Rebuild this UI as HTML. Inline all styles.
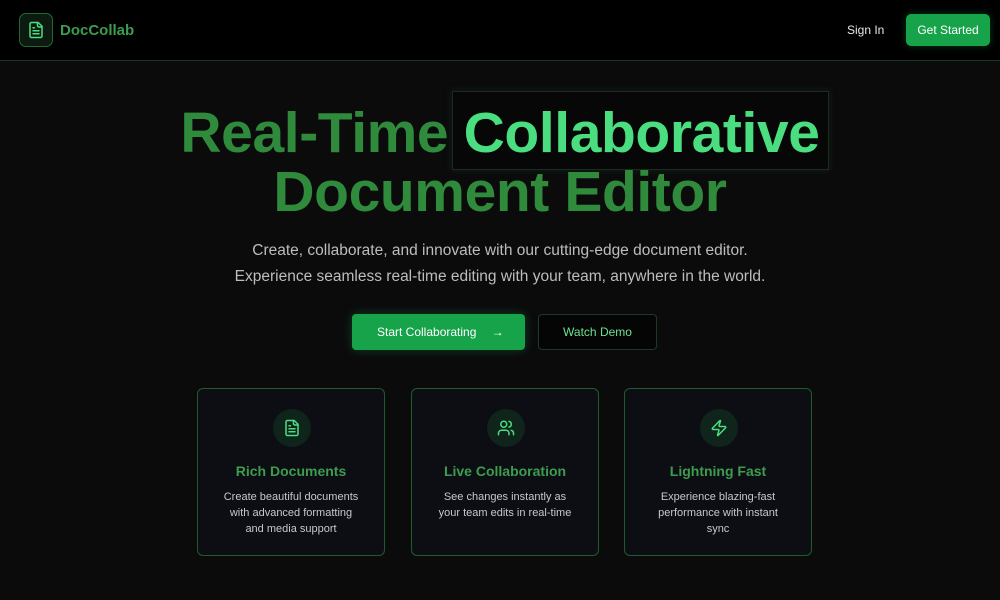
<!DOCTYPE html>
<html><head><style>
*{margin:0;padding:0;box-sizing:border-box}
body{width:1000px;height:600px;background:#0b0b0c;font-family:"Liberation Sans",sans-serif;overflow:hidden;position:relative}
.hdr{position:absolute;left:0;top:0;width:1000px;height:61px;background:#000;border-bottom:1px solid #143820}
.logo{position:absolute;left:19px;top:13px;width:34px;height:34px;border:1px solid #1f6b35;border-radius:7px;background:#0c1a10;display:flex;align-items:center;justify-content:center}
.brand{position:absolute;left:60px;top:22px;color:#3d9c4d;font-weight:bold;font-size:15px}
.signin{position:absolute;left:847px;top:23px;color:#e8e8e8;font-size:12px}
.gs{position:absolute;left:906px;top:14px;width:84px;height:32px;background:#16a34a;border-radius:5px;color:#fff;font-size:12px;text-align:center;line-height:32px;box-shadow:0 0 8px rgba(22,163,74,.35)}
.hl{position:absolute;left:452px;top:91px;width:377px;height:79px;background:#070707;border:1px solid #1c2c1f;box-shadow:0 0 8px rgba(40,100,50,.25)}
.t{position:absolute;left:0;width:1000px;text-align:center;font-weight:bold;font-size:57px;letter-spacing:-0.4px;color:#2f8a3c;line-height:60px}
.t span{color:#4ade80}
.sub{position:absolute;left:0;width:1000px;text-align:center;color:#bdbdbd;font-size:15.5px;line-height:26px;top:238px}
.b1{position:absolute;left:352px;top:314px;width:173px;height:36px;background:#16a34a;border-radius:4px;color:#fff;font-size:12px;line-height:36px;padding-left:25px;box-shadow:0 0 10px rgba(22,163,74,.35)}
.b2{position:absolute;left:538px;top:314px;width:119px;height:36px;border:1px solid #1c3a25;border-radius:4px;color:#6ee08f;font-size:12px;line-height:34px;text-align:center;background:#050505}
.card{position:absolute;top:388px;width:188px;height:168px;border:1px solid #1f5a2e;border-radius:6px;background:#0d0e14;text-align:center}
.ic{position:absolute;left:75px;top:20px;width:38px;height:38px;border-radius:50%;background:#0f241a;display:flex;align-items:center;justify-content:center}
.ct{position:absolute;top:74px;width:100%;color:#3d9c4d;font-size:14px;font-weight:bold}
.cd{position:absolute;top:100px;left:22px;right:22px;color:#c8c8c8;font-size:11px;line-height:16px}
</style></head><body>
<div class="hdr">
<div class="logo"><svg width="18" height="18" viewBox="0 0 24 24" fill="none" stroke="#4ade80" stroke-width="2" stroke-linecap="round" stroke-linejoin="round"><path d="M15 2H6a2 2 0 0 0-2 2v16a2 2 0 0 0 2 2h12a2 2 0 0 0 2-2V7Z"/><path d="M14 2v4a2 2 0 0 0 2 2h4"/><path d="M10 9H8M16 13H8M16 17H8"/></svg></div>
<div class="brand">DocCollab</div>
<div class="signin">Sign In</div>
<div class="gs">Get Started</div>
</div>
<div class="hl"></div>
<div class="t" style="top:103px">Real-Time <span>Collaborative</span></div>
<div class="t" style="top:162px">Document Editor</div>
<div class="sub">Create, collaborate, and innovate with our cutting-edge document editor.<br>Experience seamless real-time editing with your team, anywhere in the world.</div>
<div class="b1">Start Collaborating <span style="margin-left:12px">→</span></div>
<div class="b2">Watch Demo</div>
<div class="card" style="left:197px"><div class="ic"><svg width="18" height="18" viewBox="0 0 24 24" fill="none" stroke="#4ade80" stroke-width="2" stroke-linecap="round" stroke-linejoin="round"><path d="M15 2H6a2 2 0 0 0-2 2v16a2 2 0 0 0 2 2h12a2 2 0 0 0 2-2V7Z"/><path d="M14 2v4a2 2 0 0 0 2 2h4"/><path d="M10 9H8M16 13H8M16 17H8"/></svg></div><div class="ct">Rich Documents</div><div class="cd">Create beautiful documents with advanced formatting and media support</div></div>
<div class="card" style="left:411px"><div class="ic"><svg width="18" height="18" viewBox="0 0 24 24" fill="none" stroke="#4ade80" stroke-width="2" stroke-linecap="round" stroke-linejoin="round"><path d="M16 21v-2a4 4 0 0 0-4-4H6a4 4 0 0 0-4 4v2"/><circle cx="9" cy="7" r="4"/><path d="M22 21v-2a4 4 0 0 0-3-3.87M16 3.13a4 4 0 0 1 0 7.75"/></svg></div><div class="ct">Live Collaboration</div><div class="cd">See changes instantly as your team edits in real-time</div></div>
<div class="card" style="left:624px"><div class="ic"><svg width="18" height="18" viewBox="0 0 24 24" fill="none" stroke="#4ade80" stroke-width="2" stroke-linecap="round" stroke-linejoin="round"><path d="M4 14a1 1 0 0 1-.78-1.63l9.9-10.2a.5.5 0 0 1 .86.46l-1.92 6.02A1 1 0 0 0 13 10h7a1 1 0 0 1 .78 1.63l-9.9 10.2a.5.5 0 0 1-.86-.46l1.92-6.02A1 1 0 0 0 11 14z"/></svg></div><div class="ct">Lightning Fast</div><div class="cd">Experience blazing-fast performance with instant sync</div></div>
</body></html>
